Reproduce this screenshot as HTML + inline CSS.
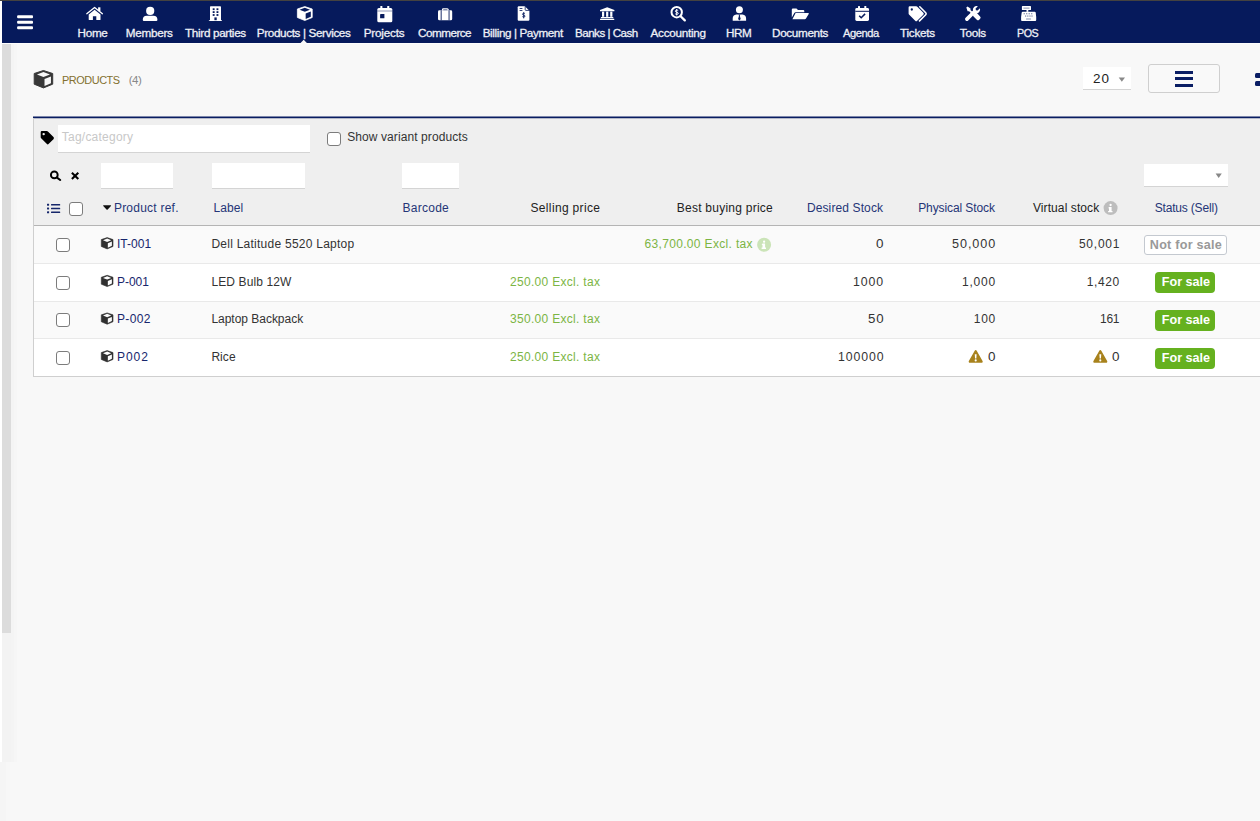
<!DOCTYPE html>
<html lang="en">
<head>
<meta charset="utf-8">
<title>Products</title>
<style>
html,body{margin:0;padding:0;}
body{width:1260px;height:821px;overflow:hidden;background:#f8f8f8;position:relative;font-family:"Liberation Sans",sans-serif;}
.a{position:absolute;}
.t{position:absolute;white-space:pre;line-height:20px;height:20px;font-family:"Liberation Sans",sans-serif;}
.nav{left:2px;top:1px;width:1258px;height:42px;background:#061a5c;}
.inp{background:#fff;border-bottom:1px solid #d4d4d4;box-sizing:border-box;}
.cb{box-sizing:border-box;width:14px;height:14px;border:1px solid #7c7c7c;border-radius:3px;background:#fff;}
.row{left:34px;width:1226px;}
.sep{left:34px;width:1226px;height:1px;background:#e9e9e9;}
.badge-g{background:#65b11f;border-radius:4px;}
svg{position:absolute;overflow:visible;}
</style>
</head>
<body>
<!-- chrome edges -->
<div class="a" style="left:0;top:0;width:1260px;height:1px;background:#444240"></div>
<div class="a" style="left:0;top:1px;width:2px;height:761px;background:#fff"></div>
<div class="a" style="left:2px;top:44px;width:9px;height:589px;background:#dcdcdc"></div>
<div class="a" style="left:11px;top:44px;width:3px;height:718px;background:#f4f4f4"></div><div class="a" style="left:14px;top:44px;width:3px;height:718px;background:#f6f6f6"></div>
<div class="a" style="left:2px;top:633px;width:9px;height:129px;background:#f3f3f3"></div>
<div class="a" style="left:0;top:762px;width:6px;height:59px;background:#f5f5f5"></div><div class="a" style="left:6px;top:762px;width:4px;height:59px;background:#f7f7f7"></div>
<!-- top nav -->
<div class="a nav"></div>
<div class="a" style="left:2px;top:43px;width:1258px;height:1px;background:#fdfdfd"></div>

<!-- title bar -->
<div class="a inp" style="left:1083px;top:67px;width:48px;height:23px;"></div>
<div class="a" style="left:1148px;top:64px;width:72px;height:29px;box-sizing:border-box;border:1px solid #cfcfcf;border-radius:3px;background:#f9f9f9"></div>
<div class="a" style="left:1175px;top:71px;width:18px;height:3px;background:#0a1e64"></div>
<div class="a" style="left:1175px;top:77px;width:18px;height:3px;background:#0a1e64"></div>
<div class="a" style="left:1175px;top:83.5px;width:18px;height:3px;background:#0a1e64"></div>
<div class="a" style="left:1255px;top:73px;width:6px;height:5px;border-radius:1.5px;background:#0a1e64"></div>
<div class="a" style="left:1255px;top:80.5px;width:6px;height:5px;border-radius:1.5px;background:#0a1e64"></div>
<!-- list panel -->
<div class="a" style="left:33px;top:116px;width:1227px;height:1px;background:#7d86aa"></div><div class="a" style="left:33px;top:117px;width:1227px;height:1px;background:#0a1e62"></div><div class="a" style="left:33px;top:118px;width:1227px;height:1px;background:#b5b9c9"></div>
<div class="a" style="left:33px;top:118px;width:1px;height:259px;background:#cfcfcf"></div>
<div class="a" style="left:34px;top:119px;width:1226px;height:106px;background:#efefef"></div>
<div class="a" style="left:34px;top:225px;width:1226px;height:1px;background:#b4b4b4"></div>
<div class="a row" style="top:226px;height:37px;background:#fafafa"></div>
<div class="a row" style="top:264px;height:37px;background:#fff"></div>
<div class="a row" style="top:302px;height:36px;background:#fafafa"></div>
<div class="a row" style="top:339px;height:37px;background:#fff"></div>
<div class="a sep" style="top:263px"></div>
<div class="a sep" style="top:301px"></div>
<div class="a sep" style="top:338px"></div>
<div class="a" style="left:33px;top:376px;width:1227px;height:1px;background:#cfcfcf"></div>
<!-- filter inputs -->
<div class="a inp" style="left:58px;top:125px;width:252px;height:28px;"></div>
<div class="a cb" style="left:327px;top:132px;"></div>
<div class="a inp" style="left:101px;top:163px;width:72px;height:26px;"></div>
<div class="a inp" style="left:212px;top:163px;width:93px;height:26px;"></div>
<div class="a inp" style="left:402px;top:163px;width:57px;height:26px;"></div>
<div class="a inp" style="left:1144px;top:164px;width:84px;height:23px;"></div>
<div class="a cb" style="left:69px;top:202px;"></div>
<div class="a cb" style="left:56px;top:238px;"></div>
<div class="a cb" style="left:56px;top:276px;"></div>
<div class="a cb" style="left:56px;top:313px;"></div>
<div class="a cb" style="left:56px;top:351px;"></div>
<!-- badges -->
<div class="a" style="left:1144px;top:235px;width:83px;height:20px;box-sizing:border-box;border:1px solid #c4c9d0;border-radius:3px;background:#fff"></div>
<div class="a badge-g" style="left:1155px;top:272px;width:60px;height:21px;"></div>
<div class="a badge-g" style="left:1155px;top:310px;width:60px;height:21px;"></div>
<div class="a badge-g" style="left:1155px;top:348px;width:60px;height:21px;"></div>
<svg style="left:0;top:0" width="1260" height="44" viewBox="0 0 1260 44"><rect x="17.1" y="15.2" width="15.9" height="3" rx="1" fill="#fff"/><rect x="17.1" y="20.8" width="15.9" height="3" rx="1" fill="#fff"/><rect x="17.1" y="26.3" width="15.9" height="3" rx="1" fill="#fff"/><g transform="translate(86.1,6.8)" fill="#fff"><path d="M2.6 7.7 L8.5 2.9 L14.4 7.7 V12.6 a.7 .7 0 0 1 -.7 .7 H10.2 V9.4 H6.8 V13.3 H3.3 a.7 .7 0 0 1 -.7 -.7 Z"/><path d="M0.7 6.9 L8.5 0.7 L16.3 6.9" fill="none" stroke="#fff" stroke-width="1.35" stroke-linecap="round" stroke-linejoin="round"/><rect x="12" y="0.5" width="2.3" height="3.8"/></g><circle cx="150.2" cy="10.9" r="4.1" fill="#fff"/><path d="M142.8 19.6 a3.9 3.9 0 0 1 3.9 -3.9 h6.8 a3.9 3.9 0 0 1 3.9 3.9 v0.3 a1.1 1.1 0 0 1 -1.1 1.1 h-12.4 a1.1 1.1 0 0 1 -1.1 -1.1 z" fill="#fff"/><path d="M210 6.9 a.7 .7 0 0 1 .7 -.7 h9.6 a.7 .7 0 0 1 .7 .7 V20.2 h1 v.9 h-13.1 v-.9 h1.1 z" fill="#fff"/><rect x="212.7" y="8.3" width="1.9" height="1.8" fill="#061a5c"/><rect x="212.7" y="11.2" width="1.9" height="1.8" fill="#061a5c"/><rect x="212.7" y="14.1" width="1.9" height="1.8" fill="#061a5c"/><rect x="216.5" y="8.3" width="1.9" height="1.8" fill="#061a5c"/><rect x="216.5" y="11.2" width="1.9" height="1.8" fill="#061a5c"/><rect x="216.5" y="14.1" width="1.9" height="1.8" fill="#061a5c"/><rect x="214.4" y="17.4" width="2.3" height="2.8" fill="#061a5c"/><polygon points="304.80,6.59 312.21,8.99 312.21,17.52 304.80,20.51 297.39,17.52 297.39,8.99" fill="#fff" stroke="#fff" stroke-width="0.78" stroke-linejoin="round"/><polygon points="304.80,7.74 310.03,9.80 304.80,11.86 299.57,9.80" fill="#061a5c"/><polygon points="305.66,13.48 310.81,11.49 310.81,16.71 305.66,19.06" fill="#061a5c"/><path d="M377.3 9.6 a1.5 1.5 0 0 1 1.5 -1.5 h12 a1.5 1.5 0 0 1 1.5 1.5 v11.1 a1.5 1.5 0 0 1 -1.5 1.5 h-12 a1.5 1.5 0 0 1 -1.5 -1.5 z" fill="#fff"/><rect x="380.3" y="5.9" width="2.1" height="3.4" rx=".5" fill="#fff"/><rect x="387.2" y="5.9" width="2.1" height="3.4" rx=".5" fill="#fff"/><rect x="377.3" y="10.6" width="15" height=".8" fill="#061a5c" opacity=".55"/><rect x="380.1" y="14" width="4.3" height="4.3" rx=".4" fill="#061a5c"/><rect x="438" y="10.3" width="14.2" height="10" rx="1.4" fill="#fff"/><path d="M442.6 10.5 V9.6 a.7 .7 0 0 1 .7 -.7 h4.1 a.7 .7 0 0 1 .7 .7 V10.5" fill="none" stroke="#fff" stroke-width="1.3"/><rect x="440.7" y="10.3" width="0.9" height="10" fill="#061a5c"/><rect x="448.6" y="10.3" width="0.9" height="10" fill="#061a5c"/><path d="M517.7 7.3 a1 1 0 0 1 1 -1 h6.2 l4.5 4.5 v9 a1 1 0 0 1 -1 1 h-9.7 a1 1 0 0 1 -1 -1 z" fill="#fff"/><path d="M525.2 6.3 v3.4 a.7 .7 0 0 0 .7 .7 h3.5" fill="none" stroke="#061a5c" stroke-width=".8"/><rect x="519.6" y="8.2" width="2.8" height=".8" fill="#061a5c"/><rect x="519.6" y="10" width="2.8" height=".8" fill="#061a5c"/><path d="M524.9 13.6 c-.4-.5-2.4-.6-2.4 .6 c0 1.3 2.5 .6 2.5 1.9 c0 1.2-2 1.1-2.6 .5 M523.7 12.2 v6.2" fill="none" stroke="#061a5c" stroke-width=".9"/><path d="M607.2 7.2 L614.4 10 v1.2 h-14.4 V10 z" fill="#fff"/><rect x="602" y="11.6" width="2.2" height="5.2" fill="#fff"/><rect x="606.1" y="11.6" width="2.2" height="5.2" fill="#fff"/><rect x="610.2" y="11.6" width="2.2" height="5.2" fill="#fff"/><rect x="600.9" y="17" width="12.4" height="1.2" fill="#fff"/><rect x="600" y="18.7" width="14.3" height="1.2" rx=".3" fill="#fff"/><circle cx="676.7" cy="12.2" r="5.2" fill="none" stroke="#fff" stroke-width="2"/><path d="M680.6 16.2 L684.8 20.4" stroke="#fff" stroke-width="2.3" stroke-linecap="round"/><path d="M678.2 10.6 c-.5-.6-2.9-.7-2.9 .6 c0 1.4 3 .7 3 2.1 c0 1.3-2.5 1.2-3.1 .5 M676.7 9 v6.5" fill="none" stroke="#fff" stroke-width="1"/><circle cx="739.4" cy="9.8" r="3.5" fill="#fff"/><path d="M732.7 20.8 v-2.2 a4 4 0 0 1 3.6 -4 h6.2 a4 4 0 0 1 3.6 4 v2.2 z" fill="#fff"/><path d="M738.5 14.4 h1.8 l-.5 1.3 l.9 3.4 l-1.3 1.5 l-1.3 -1.5 l.9 -3.4 z" fill="#061a5c"/><path d="M791.8 17.6 V9.5 a1.1 1.1 0 0 1 1.1 -1.1 h3.6 l1.5 1.5 h5.2 a1.1 1.1 0 0 1 1.1 1.1 v1.3 h-8.6 a1.6 1.6 0 0 0 -1.4 .8 z" fill="#fff"/><path d="M795.6 13.1 h12.6 a.6 .6 0 0 1 .5 .9 l-2.7 4.6 a1.4 1.4 0 0 1 -1.2 .7 h-12.4 z" fill="#fff"/><path d="M855.3 9.5 a1.4 1.4 0 0 1 1.4 -1.4 h10.9 a1.4 1.4 0 0 1 1.4 1.4 v10.1 a1.4 1.4 0 0 1 -1.4 1.4 h-10.9 a1.4 1.4 0 0 1 -1.4 -1.4 z" fill="#fff"/><rect x="858" y="6" width="2" height="3.2" rx=".5" fill="#fff"/><rect x="864.3" y="6" width="2" height="3.2" rx=".5" fill="#fff"/><rect x="855.3" y="10.8" width="13.7" height="1" fill="#061a5c"/><path d="M859.2 15.8 l2 2 l3.9 -3.9" fill="none" stroke="#061a5c" stroke-width="1.5"/><path d="M908.6 7.4 a1.1 1.1 0 0 1 1.1 -1.1 h6.6 a1.5 1.5 0 0 1 1 .4 l6 6 a1.4 1.4 0 0 1 0 2 l-6.1 6.1 a1.4 1.4 0 0 1 -2 0 l-6.2 -6.2 a1.5 1.5 0 0 1 -.4 -1 z" fill="#fff"/><circle cx="911.8" cy="9.5" r="1.15" fill="#061a5c"/><path d="M919.8 6.8 l5.9 5.9 a1.4 1.4 0 0 1 0 2 l-6.2 6.2" fill="none" stroke="#fff" stroke-width="1.6" stroke-linecap="round"/><path d="M966.3 7.4 l1.2 -1 l3 2 v1.5 l3.2 3.2 l-1.4 1.4 l-3.2 -3.2 h-1.5 z" fill="#fff"/><path d="M973.3 14.6 l1.8 -1.8 a1.2 1.2 0 0 1 1.6 0 l3.4 3.6 a1.7 1.7 0 0 1 0 2.4 l-.9 .9 a1.7 1.7 0 0 1 -2.4 0 l-3.5 -3.5 a1.2 1.2 0 0 1 0 -1.6 z" fill="#fff"/><path d="M979.9 8.3 l-2.3 2.3 l-1.7 -.3 l-.3 -1.7 l2.3 -2.3 a3.6 3.6 0 0 0 -4.9 4.3 l-7.4 7.2 a1.8 1.8 0 0 0 2.6 2.6 l7.3 -7.3 a3.6 3.6 0 0 0 4.4 -4.8 z" fill="#fff"/><rect x="1021.9" y="6.1" width="9.1" height="4" rx=".6" fill="#fff"/><rect x="1023.4" y="7.7" width="6.1" height=".8" fill="#061a5c" opacity=".6"/><rect x="1026.5" y="10" width="1.8" height="1.9" fill="#fff"/><path d="M1022.7 11.8 h12 a1 1 0 0 1 1 .8 l.5 4.5 v3 a.9 .9 0 0 1 -.9 .9 h-13.3 a.9 .9 0 0 1 -.9 -.9 v-3 l.6 -4.5 a1 1 0 0 1 1 -.8 z" fill="#fff"/><rect x="1026" y="18.5" width="5" height="1" rx=".3" fill="#061a5c" opacity=".5"/><rect x="1023.6" y="13.2" width="1.2" height="1.1" fill="#061a5c" opacity=".6"/><rect x="1026.1" y="13.2" width="1.2" height="1.1" fill="#061a5c" opacity=".6"/><rect x="1028.6" y="13.2" width="1.2" height="1.1" fill="#061a5c" opacity=".6"/><rect x="1031.1" y="13.2" width="1.2" height="1.1" fill="#061a5c" opacity=".6"/><rect x="1025" y="15.5" width="1.2" height="1.1" fill="#061a5c" opacity=".6"/><rect x="1027.2" y="15.5" width="1.2" height="1.1" fill="#061a5c" opacity=".6"/><rect x="1029.4" y="15.5" width="1.2" height="1.1" fill="#061a5c" opacity=".6"/><rect x="1031.4" y="15.5" width="1.2" height="1.1" fill="#061a5c" opacity=".6"/><polygon points="300.3,43.2 303.7,39.7 307.1,43.2" fill="#f8f8f8"/></svg>
<svg style="left:0;top:44px" width="1260" height="400" viewBox="0 44 1260 400"><polygon points="43.45,70.49 52.71,73.50 52.71,84.17 43.45,87.91 34.19,84.17 34.19,73.50" fill="#383838" stroke="#383838" stroke-width="0.98" stroke-linejoin="round"/><polygon points="43.45,71.93 49.98,74.51 43.45,77.08 36.92,74.51" fill="#f8f8f8"/><polygon points="44.52,79.11 50.96,76.62 50.96,83.16 44.52,86.10" fill="#f8f8f8"/><polygon points="107.15,237.61 112.99,239.56 112.99,246.46 107.15,248.89 101.31,246.46 101.31,239.56" fill="#303030" stroke="#303030" stroke-width="0.62" stroke-linejoin="round"/><polygon points="107.15,238.55 111.27,240.22 107.15,241.88 103.03,240.22" fill="#fafafa"/><polygon points="107.83,243.19 111.89,241.58 111.89,245.81 107.83,247.71" fill="#fafafa"/><polygon points="107.15,275.31 112.99,277.26 112.99,284.16 107.15,286.59 101.31,284.16 101.31,277.26" fill="#303030" stroke="#303030" stroke-width="0.62" stroke-linejoin="round"/><polygon points="107.15,276.25 111.27,277.92 107.15,279.58 103.03,277.92" fill="#fff"/><polygon points="107.83,280.89 111.89,279.28 111.89,283.51 107.83,285.41" fill="#fff"/><polygon points="107.15,312.91 112.99,314.86 112.99,321.76 107.15,324.19 101.31,321.76 101.31,314.86" fill="#303030" stroke="#303030" stroke-width="0.62" stroke-linejoin="round"/><polygon points="107.15,313.85 111.27,315.52 107.15,317.18 103.03,315.52" fill="#fafafa"/><polygon points="107.83,318.49 111.89,316.88 111.89,321.11 107.83,323.01" fill="#fafafa"/><polygon points="107.15,350.61 112.99,352.56 112.99,359.46 107.15,361.89 101.31,359.46 101.31,352.56" fill="#303030" stroke="#303030" stroke-width="0.62" stroke-linejoin="round"/><polygon points="107.15,351.55 111.27,353.22 107.15,354.88 103.03,353.22" fill="#fff"/><polygon points="107.83,356.19 111.89,354.58 111.89,358.81 107.83,360.71" fill="#fff"/><g transform="translate(40.7,131.1) scale(0.99)"><path d="M0 1.1 a1.1 1.1 0 0 1 1.1 -1.1 h5.1 a1.6 1.6 0 0 1 1.1 .45 l5.6 5.6 a1.5 1.5 0 0 1 0 2.1 l-4.75 4.75 a1.5 1.5 0 0 1 -2.1 0 l-5.6 -5.6 a1.6 1.6 0 0 1 -.45 -1.1 z" fill="#000"/><circle cx="3" cy="3" r="1.2" fill="#efefef"/></g><circle cx="54.3" cy="174.9" r="3.4" fill="none" stroke="#000" stroke-width="1.9"/><path d="M57 177.7 L60.2 180" stroke="#000" stroke-width="2.1" stroke-linecap="round"/><path d="M71.9 172.7 L78.3 178.9 M78.3 172.7 L71.9 178.9" stroke="#000" stroke-width="2.1" stroke-linecap="butt"/><rect x="47" y="203.7" width="2.1" height="2" rx=".4" fill="#16276b"/><rect x="51" y="203.89999999999998" width="9.2" height="1.6" rx=".5" fill="#16276b"/><rect x="47" y="207.5" width="2.1" height="2" rx=".4" fill="#16276b"/><rect x="51" y="207.7" width="9.2" height="1.6" rx=".5" fill="#16276b"/><rect x="47" y="211.3" width="2.1" height="2" rx=".4" fill="#16276b"/><rect x="51" y="211.5" width="9.2" height="1.6" rx=".5" fill="#16276b"/><path d="M103.6 205.2 h7 a.5 .5 0 0 1 .35 .85 l-3.5 3.6 a.5 .5 0 0 1 -.7 0 l-3.5 -3.6 a.5 .5 0 0 1 .35 -.85 z" fill="#111"/><polygon points="1118.7,77.4 1125,77.4 1121.85,81.7" fill="#888"/><polygon points="1215.6,173.4 1221.8,173.4 1218.7,177.9" fill="#888"/><circle cx="764.1" cy="244.8" r="7" fill="#cbe4b8"/><circle cx="764.1" cy="241.70000000000002" r="1.15" fill="#fff"/><path d="M762.5 243.60000000000002 h2.6 v4 h.9 v1.3 h-4.4 v-1.3 h.9 v-2.7 h-.9 z" fill="#fff"/><circle cx="1110.6" cy="208.1" r="7" fill="#bdbdbd"/><circle cx="1110.6" cy="205.0" r="1.15" fill="#fff"/><path d="M1109.0 206.9 h2.6 v4 h.9 v1.3 h-4.4 v-1.3 h.9 v-2.7 h-.9 z" fill="#fff"/><path d="M1099.30 350.70 a1.15 1.15 0 0 1 2 0 l5.85 10.3 a1.15 1.15 0 0 1 -1 1.75 h-11.7 a1.15 1.15 0 0 1 -1 -1.75 z" fill="#a8821c"/><path d="M1099.35 354.30 h1.9 l-.3 4.1 h-1.3 z" fill="#fff"/><circle cx="1100.30" cy="360.40" r="1.05" fill="#fff"/><path d="M974.70 350.70 a1.15 1.15 0 0 1 2 0 l5.85 10.3 a1.15 1.15 0 0 1 -1 1.75 h-11.7 a1.15 1.15 0 0 1 -1 -1.75 z" fill="#a8821c"/><path d="M974.75 354.30 h1.9 l-.3 4.1 h-1.3 z" fill="#fff"/><circle cx="975.70" cy="360.40" r="1.05" fill="#fff"/></svg>
<span class="t" style="left:77.60px;top:23px;font-size:11.7px;font-weight:400;color:#eef0f6;letter-spacing:-0.317px;-webkit-text-stroke:0.3px #eef0f6;">Home</span>
<span class="t" style="left:125.80px;top:23px;font-size:11.7px;font-weight:400;color:#eef0f6;letter-spacing:-0.275px;-webkit-text-stroke:0.3px #eef0f6;">Members</span>
<span class="t" style="left:185.05px;top:23px;font-size:11.7px;font-weight:400;color:#eef0f6;letter-spacing:-0.321px;-webkit-text-stroke:0.3px #eef0f6;">Third parties</span>
<span class="t" style="left:256.80px;top:23px;font-size:11.7px;font-weight:400;color:#eef0f6;letter-spacing:-0.356px;-webkit-text-stroke:0.3px #eef0f6;">Products | Services</span>
<span class="t" style="left:363.70px;top:23px;font-size:11.7px;font-weight:400;color:#eef0f6;letter-spacing:-0.179px;-webkit-text-stroke:0.3px #eef0f6;">Projects</span>
<span class="t" style="left:418.00px;top:23px;font-size:11.7px;font-weight:400;color:#eef0f6;letter-spacing:-0.500px;-webkit-text-stroke:0.3px #eef0f6;transform:scaleX(0.9991);transform-origin:0 0;">Commerce</span>
<span class="t" style="left:482.70px;top:23px;font-size:11.7px;font-weight:400;color:#eef0f6;letter-spacing:-0.397px;-webkit-text-stroke:0.3px #eef0f6;">Billing | Payment</span>
<span class="t" style="left:574.81px;top:23px;font-size:11.7px;font-weight:400;color:#eef0f6;letter-spacing:-0.500px;-webkit-text-stroke:0.3px #eef0f6;transform:scaleX(0.9903);transform-origin:0 0;">Banks | Cash</span>
<span class="t" style="left:650.50px;top:23px;font-size:11.7px;font-weight:400;color:#eef0f6;letter-spacing:-0.256px;-webkit-text-stroke:0.3px #eef0f6;">Accounting</span>
<span class="t" style="left:726.10px;top:23px;font-size:11.7px;font-weight:400;color:#eef0f6;letter-spacing:-0.475px;-webkit-text-stroke:0.3px #eef0f6;">HRM</span>
<span class="t" style="left:772.10px;top:23px;font-size:11.7px;font-weight:400;color:#eef0f6;letter-spacing:-0.344px;-webkit-text-stroke:0.3px #eef0f6;">Documents</span>
<span class="t" style="left:843.40px;top:23px;font-size:11.7px;font-weight:400;color:#eef0f6;letter-spacing:-0.500px;-webkit-text-stroke:0.3px #eef0f6;transform:scaleX(0.9553);transform-origin:0 0;">Agenda</span>
<span class="t" style="left:900.05px;top:23px;font-size:11.7px;font-weight:400;color:#eef0f6;letter-spacing:-0.267px;-webkit-text-stroke:0.3px #eef0f6;">Tickets</span>
<span class="t" style="left:959.85px;top:23px;font-size:11.7px;font-weight:400;color:#eef0f6;letter-spacing:-0.237px;-webkit-text-stroke:0.3px #eef0f6;">Tools</span>
<span class="t" style="left:1017.38px;top:23px;font-size:11.7px;font-weight:400;color:#eef0f6;letter-spacing:-0.500px;-webkit-text-stroke:0.3px #eef0f6;transform:scaleX(0.9169);transform-origin:0 0;">POS</span>
<span class="t" style="left:62.06px;top:70px;font-size:11.7px;font-weight:400;color:#83702f;letter-spacing:-0.500px;transform:scaleX(0.9355);transform-origin:0 0;">PRODUCTS</span>
<span class="t" style="left:128.65px;top:70px;font-size:11.5px;font-weight:400;color:#888;letter-spacing:-0.425px;">(4)</span>
<span class="t" style="left:1093.28px;top:69px;font-size:13px;font-weight:400;color:#222;letter-spacing:0.900px;transform:scaleX(1.0347);transform-origin:0 0;">20</span>
<span class="t" style="left:61.75px;top:127px;font-size:12px;font-weight:400;color:#c8c8c8;letter-spacing:0.236px;">Tag/category</span>
<span class="t" style="left:347.20px;top:127px;font-size:12px;font-weight:400;color:#333;letter-spacing:0.093px;">Show variant products</span>
<span class="t" style="left:113.90px;top:198px;font-size:12px;font-weight:400;color:#253577;letter-spacing:0.236px;">Product ref.</span>
<span class="t" style="left:213.40px;top:198px;font-size:12px;font-weight:400;color:#253577;letter-spacing:0.100px;">Label</span>
<span class="t" style="left:402.60px;top:198px;font-size:12px;font-weight:400;color:#253577;letter-spacing:0.242px;">Barcode</span>
<span class="t" style="left:530.50px;top:198px;font-size:12px;font-weight:400;color:#222;letter-spacing:0.342px;">Selling price</span>
<span class="t" style="left:676.80px;top:198px;font-size:12px;font-weight:400;color:#222;letter-spacing:0.244px;">Best buying price</span>
<span class="t" style="left:806.90px;top:198px;font-size:12px;font-weight:400;color:#253577;letter-spacing:0.121px;">Desired Stock</span>
<span class="t" style="left:918.20px;top:198px;font-size:12px;font-weight:400;color:#253577;letter-spacing:-0.100px;">Physical Stock</span>
<span class="t" style="left:1033.00px;top:198px;font-size:12px;font-weight:400;color:#222;letter-spacing:0.083px;">Virtual stock</span>
<span class="t" style="left:1154.70px;top:198px;font-size:12px;font-weight:400;color:#253577;letter-spacing:-0.179px;">Status (Sell)</span>
<span class="t" style="left:117.00px;top:234px;font-size:12px;font-weight:400;color:#17266d;letter-spacing:0.020px;">IT-001</span>
<span class="t" style="left:211.40px;top:234px;font-size:12px;font-weight:400;color:#333;letter-spacing:0.252px;">Dell Latitude 5520 Laptop</span>
<span class="t" style="left:117.00px;top:272px;font-size:12px;font-weight:400;color:#17266d;letter-spacing:-0.050px;">P-001</span>
<span class="t" style="left:211.40px;top:272px;font-size:12px;font-weight:400;color:#333;letter-spacing:0.114px;">LED Bulb 12W</span>
<span class="t" style="left:117.00px;top:309px;font-size:12px;font-weight:400;color:#17266d;letter-spacing:0.325px;">P-002</span>
<span class="t" style="left:211.40px;top:309px;font-size:12px;font-weight:400;color:#333;letter-spacing:-0.021px;">Laptop Backpack</span>
<span class="t" style="left:117.00px;top:347px;font-size:12px;font-weight:400;color:#17266d;letter-spacing:0.900px;transform:scaleX(1.0034);transform-origin:0 0;">P002</span>
<span class="t" style="left:211.40px;top:347px;font-size:12px;font-weight:400;color:#333;letter-spacing:0.067px;">Rice</span>
<span class="t" style="left:510.00px;top:272px;font-size:12px;font-weight:400;color:#7cb544;letter-spacing:0.303px;">250.00 Excl. tax</span>
<span class="t" style="left:510.00px;top:309px;font-size:12px;font-weight:400;color:#7cb544;letter-spacing:0.303px;">350.00 Excl. tax</span>
<span class="t" style="left:510.00px;top:347px;font-size:12px;font-weight:400;color:#7cb544;letter-spacing:0.303px;">250.00 Excl. tax</span>
<span class="t" style="left:644.50px;top:234px;font-size:12px;font-weight:400;color:#7cb544;letter-spacing:0.333px;">63,700.00 Excl. tax</span>
<span class="t" style="left:876.10px;top:234px;font-size:12px;font-weight:400;color:#333;letter-spacing:0.000px;transform:scaleX(1.1200);transform-origin:0 0;">0</span>
<span class="t" style="left:853.37px;top:272px;font-size:12px;font-weight:400;color:#333;letter-spacing:0.900px;transform:scaleX(1.0268);transform-origin:0 0;">1000</span>
<span class="t" style="left:867.85px;top:309px;font-size:12px;font-weight:400;color:#333;letter-spacing:0.900px;transform:scaleX(1.1045);transform-origin:0 0;">50</span>
<span class="t" style="left:837.98px;top:347px;font-size:12px;font-weight:400;color:#333;letter-spacing:0.900px;transform:scaleX(1.0220);transform-origin:0 0;">100000</span>
<span class="t" style="left:952.17px;top:234px;font-size:12px;font-weight:400;color:#333;letter-spacing:0.900px;transform:scaleX(1.0509);transform-origin:0 0;">50,000</span>
<span class="t" style="left:961.90px;top:272px;font-size:12px;font-weight:400;color:#333;letter-spacing:0.838px;">1,000</span>
<span class="t" style="left:973.80px;top:309px;font-size:12px;font-weight:400;color:#333;letter-spacing:0.675px;">100</span>
<span class="t" style="left:987.90px;top:347px;font-size:12px;font-weight:400;color:#333;letter-spacing:0.000px;transform:scaleX(1.1200);transform-origin:0 0;">0</span>
<span class="t" style="left:1078.90px;top:234px;font-size:12px;font-weight:400;color:#333;letter-spacing:0.770px;">50,001</span>
<span class="t" style="left:1086.70px;top:272px;font-size:12px;font-weight:400;color:#333;letter-spacing:0.637px;">1,420</span>
<span class="t" style="left:1100.10px;top:309px;font-size:12px;font-weight:400;color:#333;letter-spacing:-0.300px;">161</span>
<span class="t" style="left:1112.00px;top:347px;font-size:12px;font-weight:400;color:#333;letter-spacing:0.000px;transform:scaleX(1.1200);transform-origin:0 0;">0</span>
<span class="t" style="left:1149.85px;top:235px;font-size:12.6px;font-weight:700;color:#999;letter-spacing:0.236px;">Not for sale</span>
<span class="t" style="left:1161.85px;top:272px;font-size:12.6px;font-weight:700;color:#fff;letter-spacing:-0.021px;">For sale</span>
<span class="t" style="left:1161.85px;top:310px;font-size:12.6px;font-weight:700;color:#fff;letter-spacing:-0.021px;">For sale</span>
<span class="t" style="left:1161.85px;top:348px;font-size:12.6px;font-weight:700;color:#fff;letter-spacing:-0.021px;">For sale</span>
</body>
</html>
